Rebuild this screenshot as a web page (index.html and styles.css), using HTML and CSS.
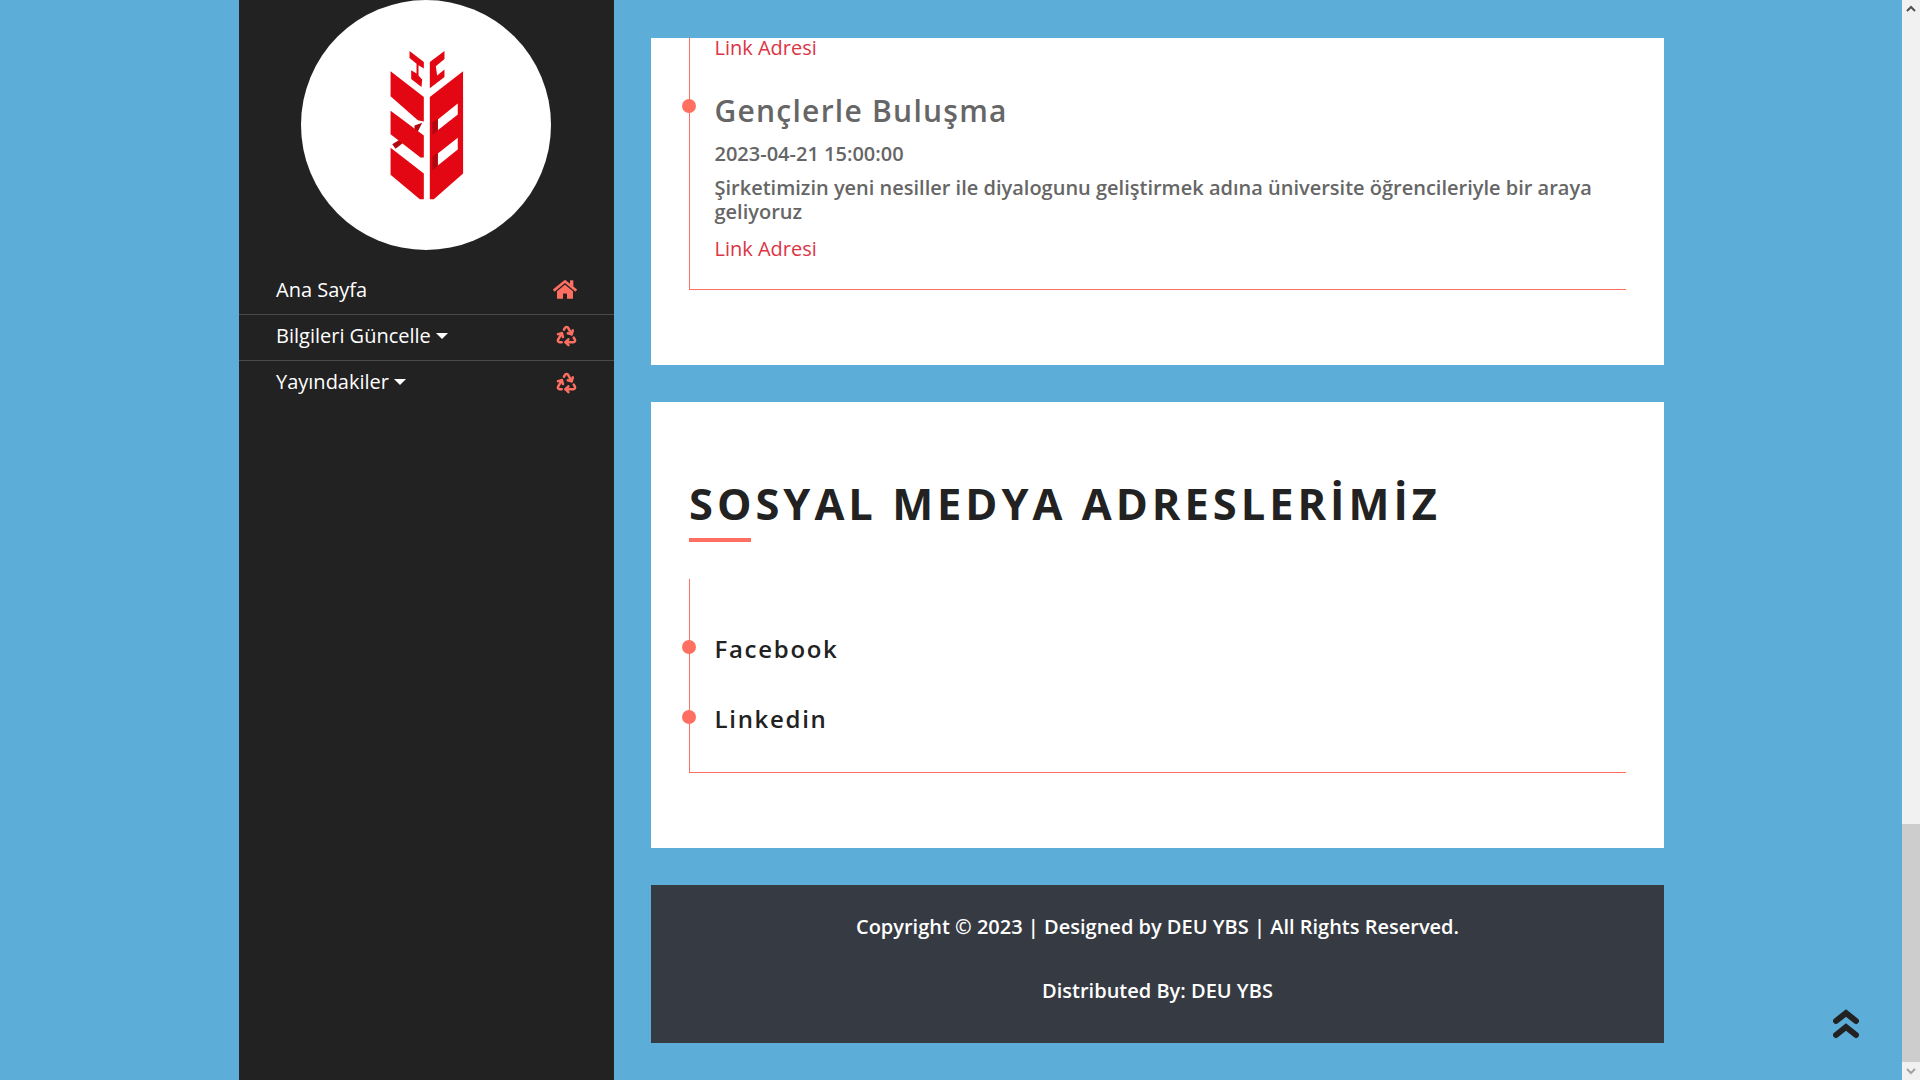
FILE: index.html
```html
<!DOCTYPE html>
<html lang="tr">
<head>
    <meta charset="UTF-8">
    <meta name="viewport" content="width=device-width, initial-scale=1.0">
    <title>Ana Sayfa</title>
    <link rel="stylesheet" href="styles.css">
</head>
<body>
    <div class="page">
        <div class="main">
            <aside class="sidebar">
                <div class="logo">
                    <svg class="logo-mark" viewBox="440 145 236 466">
                        <polygon fill="#e30613" points="507,154 550,187 550,207 534,197 534,228 545,240 543,262 512,238 512,212 528,222 528,192 507,175"/>
                        <polygon fill="#e30613" points="612,154 568,187 568,266 612,232 612,210 590,228 586,200 612,178"/>
                        <polygon fill="#b00710" points="522,378 545,370 532,396 522,390"/>
                        <polygon fill="#b00710" points="455,434 478,420 488,430 465,448"/>
                        <polygon fill="#e30613" points="450,215 550,292 550,366 532,362 450,290"/>
                        <polygon fill="#e30613" points="450,334 550,408 550,474 540,474 450,404"/>
                        <polygon fill="#e30613" points="450,445 550,522 550,600 538,600 450,526"/>
                        <polygon fill="#e30613" points="668,215 568,292 568,600 580,600 668,522"/>
                        <polygon fill="#fff" points="592,360 652,312 652,345 592,392"/>
                        <polygon fill="#fff" points="592,462 652,415 652,450 592,498"/>
                        <polygon fill="#b00710" points="576,368 592,358 592,394 576,406"/>
                        <polygon fill="#b00710" points="576,472 592,460 592,500 576,512"/>
                    </svg>
                </div>
                <nav class="menu">
                    <a class="menu-item" href="#">
                        <span>Ana Sayfa</span>
                        <svg class="menu-icon home-icon" viewBox="0 0 576 512"><path fill="#ff6f61" d="M280.37 148.26L96 300.11V464a16 16 0 0 0 16 16l112.06-.29a16 16 0 0 0 15.92-16V368a16 16 0 0 1 16-16h64a16 16 0 0 1 16 16v95.64a16 16 0 0 0 16 16.05L464 480a16 16 0 0 0 16-16V300L295.67 148.26a12.19 12.19 0 0 0-15.3 0zM571.6 251.47L488 182.56V44.05a12 12 0 0 0-12-12h-56a12 12 0 0 0-12 12v72.61L318.47 43a48 48 0 0 0-61 0L4.34 251.47a12 12 0 0 0-1.6 16.9l25.5 31A12 12 0 0 0 45.15 301l235.22-193.74a12.19 12.19 0 0 1 15.3 0L530.9 301a12 12 0 0 0 16.9-1.6l25.5-31a12 12 0 0 0-1.7-16.93z"/></svg>
                    </a>
                    <a class="menu-item" href="#">
                        <span class="caret">Bilgileri Güncelle</span>
                        <svg class="menu-icon" viewBox="0 0 24 24"><use href="#recycle"/></svg>
                    </a>
                    <a class="menu-item" href="#">
                        <span class="caret">Yayındakiler</span>
                        <svg class="menu-icon" viewBox="0 0 24 24"><use href="#recycle"/></svg>
                    </a>
                </nav>
            </aside>

            <div class="content">
                <section class="card">
                    <div class="timeline timeline-cut">
                        <a class="link" href="#">Link Adresi</a>
                        <div class="item">
                            <h4 class="item-title">Gençlerle Buluşma</h4>
                            <div class="item-date">2023-04-21 15:00:00</div>
                            <p class="item-text">Şirketimizin yeni nesiller ile diyalogunu geliştirmek adına üniversite öğrencileriyle bir araya geliyoruz</p>
                            <a class="link" href="#">Link Adresi</a>
                        </div>
                    </div>
                </section>

                <section class="card">
                    <h2 class="section-title">SOSYAL MEDYA ADRESLERİMİZ</h2>
                    <div class="timeline social">
                        <div class="item"><a class="social-link" href="#">Facebook</a></div>
                        <div class="item"><a class="social-link" href="#">Linkedin</a></div>
                    </div>
                </section>

                <footer class="footer">
                    <p>Copyright © 2023 | Designed by DEU YBS | All Rights Reserved.</p>
                    <p>Distributed By: DEU YBS</p>
                </footer>
            </div>
        </div>

        <div class="scrollbar">
            <div class="scroll-btn"><svg viewBox="0 0 18 18"><polyline points="5,11 9,7 13,11"/></svg></div>
            <div class="scroll-track"><div class="scroll-thumb"></div></div>
            <div class="scroll-btn"><svg viewBox="0 0 18 18"><polyline points="5,7 9,11 13,7"/></svg></div>
        </div>

        <a class="to-top" href="#">
            <svg viewBox="0 0 26 32"><polyline points="3,14 13,6 23,14"/><polyline points="3,28 13,20 23,28"/></svg>
        </a>
    </div>

    <svg class="defs" width="0" height="0">
        <symbol id="recycle" viewBox="0 0 24 24">
            <g fill="none" stroke="#ff6f61" stroke-width="2.6" stroke-linecap="round" stroke-linejoin="round">
                <path d="M7 19H4.815a1.83 1.83 0 0 1-1.57-.881 1.785 1.785 0 0 1-.004-1.784L7.196 9.5"/>
                <path d="M11 19h8.203a1.83 1.83 0 0 0 1.556-.89 1.784 1.784 0 0 0 0-1.775l-1.226-2.12"/>
                <path d="m14 16-3 3 3 3"/>
                <path d="M8.293 13.596 7.196 9.5 3.1 10.598"/>
                <path d="m9.344 5.811 1.093-1.892A1.83 1.83 0 0 1 11.985 3a1.784 1.784 0 0 1 1.546.888l3.943 6.843"/>
                <path d="m13.378 9.633 4.096 1.098 1.097-4.096"/>
            </g>
        </symbol>
    </svg>
</body>
</html>
```

FILE: styles.css
```css
* {
    margin: 0;
    padding: 0;
    box-sizing: border-box;
}

html, body {
    height: 100%;
    overflow: hidden;
}

body {
    font-family: "Open Sans", sans-serif;
    font-size: 20px;
    color: #666;
}

a {
    text-decoration: none;
}

.defs {
    display: block;
    height: 0;
}

.page {
    position: relative;
    display: flex;
    height: 1080px;
    overflow: hidden;
}

.main {
    flex: 1;
    display: flex;
    padding-left: 239px;
    background: #5cadd8;
}

/* sidebar */
.sidebar {
    width: 375px;
    flex-shrink: 0;
    background: #222;
}

.logo {
    width: 250px;
    height: 250px;
    margin: 0 0 19px 62px;
    display: flex;
    justify-content: center;
    align-items: center;
    background: #fff;
    border-radius: 50%;
}

.logo-mark {
    width: 79px;
    height: 155px;
}

.menu-item {
    display: flex;
    justify-content: space-between;
    align-items: center;
    height: 46px;
    padding: 0 36px 4px 37px;
    color: #fff;
    line-height: 26px;
    border-bottom: 1px solid #4a4a4a;
}

.menu-item:last-child {
    border-bottom: none;
}

.caret::after {
    content: "";
    display: inline-block;
    margin-left: 5px;
    vertical-align: 4px;
    border-top: 6px solid #fff;
    border-left: 6px solid transparent;
    border-right: 6px solid transparent;
}

.menu-icon {
    width: 23px;
    height: 23px;
}

.home-icon {
    width: 24px;
    margin-right: 1px;
}

/* content */
.content {
    width: 1050px;
    padding: 38px 0 37px 37px;
    display: flex;
    flex-direction: column;
    gap: 37px;
}

.card {
    background: #fff;
    padding: 0 38px 75px;
    overflow: hidden;
}

.section-title {
    margin-top: 77px;
    font-size: 43.4px;
    line-height: 50px;
    font-weight: 700;
    letter-spacing: 4px;
    color: #222;
}

.section-title::after {
    content: "";
    display: block;
    width: 62px;
    height: 4px;
    margin-top: 9px;
    background: #ff6f61;
}

.timeline {
    padding-left: 24.5px;
    border-left: 1px solid #ff6f61;
    border-bottom: 1px solid #ff6f61;
}

.timeline-cut {
    margin-top: -4px;
    padding-bottom: 27px;
}

.social {
    margin-top: 37px;
    padding-top: 51px;
    padding-bottom: 2px;
}

.item {
    position: relative;
}

.item::before {
    content: "";
    position: absolute;
    left: -32.5px;
    top: 0;
    width: 14px;
    height: 14px;
    background: #ff6f61;
    border-radius: 50%;
}

.timeline-cut .item {
    margin-top: 30px;
}

.timeline-cut .item::before {
    top: 8px;
}

.link {
    display: block;
    line-height: 27px;
    color: #dc3545;
}

.item-title {
    font-size: 30px;
    line-height: 40px;
    font-weight: 600;
    letter-spacing: 1.25px;
    margin-bottom: 9px;
}

.item-date {
    font-weight: 600;
    line-height: 27px;
    margin-bottom: 9px;
}

.item-text {
    font-weight: 600;
    line-height: 24px;
    margin-bottom: 11px;
}

.social .item {
    height: 70px;
}

.social .item::before {
    top: 10px;
}

.social-link {
    display: block;
    font-size: 24px;
    line-height: 38px;
    font-weight: 600;
    letter-spacing: 1.7px;
    color: #222;
}

.footer {
    flex: 1;
    padding-top: 30px;
    background: #363a42;
    color: #fff;
    font-weight: 600;
    text-align: center;
}

.footer p {
    line-height: 24px;
    margin-bottom: 40px;
}

/* scrollbar + back to top */
.scrollbar {
    width: 18px;
    display: flex;
    flex-direction: column;
    background: #f1f1f1;
}

.scroll-btn {
    height: 18px;
}

.scroll-btn svg {
    display: block;
    width: 18px;
    height: 18px;
    fill: none;
    stroke: #a3a3a3;
    stroke-width: 2;
}

.scroll-btn:first-child svg {
    stroke: #505050;
}

.scroll-track {
    flex: 1;
    display: flex;
    flex-direction: column;
    justify-content: flex-end;
}

.scroll-thumb {
    height: 238px;
    background: #cdcdcd;
}

.to-top {
    position: absolute;
    left: 1833px;
    top: 1007px;
    width: 26px;
    height: 32px;
}

.to-top svg {
    display: block;
    width: 26px;
    height: 32px;
    fill: none;
    stroke: #222;
    stroke-width: 6;
    stroke-linecap: round;
    stroke-linejoin: miter;
}
```
